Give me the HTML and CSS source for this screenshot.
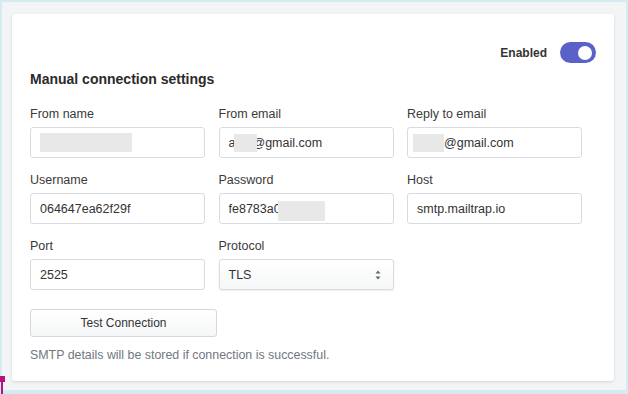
FILE: index.html
```html
<!DOCTYPE html>
<html lang="en">
<head>
<meta charset="utf-8">
<title>Manual connection settings</title>
<link rel="stylesheet" href="styles.css">
</head>
<body>
<div class="frame">
  <div class="card">
    <div class="card-head">
      <span class="toggle-label">Enabled</span>
      <span class="toggle"><span class="knob"></span></span>
    </div>
    <h2 class="title">Manual connection settings</h2>
    <div class="grid">
      <div class="field">
        <label class="label">From name</label>
        <div class="input"><span class="redact r-name"></span></div>
      </div>
      <div class="field">
        <label class="label">From email</label>
        <div class="input">a<span class="redact r-from"></span>@gmail.com</div>
      </div>
      <div class="field">
        <label class="label">Reply to email</label>
        <div class="input"><span class="redact r-reply"></span>@gmail.com</div>
      </div>
      <div class="field">
        <label class="label">Username</label>
        <div class="input">064647ea62f29f</div>
      </div>
      <div class="field">
        <label class="label">Password</label>
        <div class="input">fe8783a0<span class="redact r-pass"></span></div>
      </div>
      <div class="field">
        <label class="label">Host</label>
        <div class="input">smtp.mailtrap.io</div>
      </div>
      <div class="field">
        <label class="label">Port</label>
        <div class="input">2525</div>
      </div>
      <div class="field">
        <label class="label">Protocol</label>
        <div class="input select">
          <span>TLS</span>
          <svg class="arrows" width="6" height="10" viewBox="0 0 6 10"><path d="M3 0.5 L5.5 3.5 H0.5 Z M3 9.5 L5.5 6.5 H0.5 Z" fill="#666"/></svg>
        </div>
      </div>
    </div>
    <button class="btn" type="button">Test Connection</button>
    <p class="note">SMTP details will be stored if connection is successful.</p>
  </div>
  <span class="marker"></span>
</div>
</body>
</html>
```

FILE: styles.css
```css
html, body {
  margin: 0;
  padding: 0;
}
body {
  font-family: "Liberation Sans", Arial, sans-serif;
  color: #333;
}
.frame {
  box-sizing: border-box;
  height: 394px;
  background: #f3f4f6;
  border-style: solid;
  border-color: #d3ebf1;
  border-width: 2px 2px 4px 2px;
  padding: 12px 12px 9px 10px;
  position: relative;
}
.card {
  box-sizing: border-box;
  height: 100%;
  background: #fff;
  border-radius: 3px;
  box-shadow: 0 1px 3px rgba(0, 0, 0, 0.13);
  padding: 28px 18px 0 18px;
}
.card-head {
  display: flex;
  justify-content: flex-end;
  align-items: center;
  gap: 13px;
  height: 21px;
}
.toggle-label {
  font-weight: bold;
  font-size: 12px;
  color: #333;
}
.toggle {
  box-sizing: border-box;
  width: 36px;
  height: 21px;
  border-radius: 10.5px;
  background: #5a61c9;
  display: flex;
  align-items: center;
  justify-content: flex-end;
  padding-right: 4px;
}
.knob {
  width: 14px;
  height: 14px;
  border-radius: 50%;
  background: #fff;
}
.title {
  margin: 7px 0 0;
  font-size: 14px;
  line-height: 18px;
  font-weight: bold;
  color: #2b2b2b;
}
.grid {
  display: grid;
  grid-template-columns: repeat(3, 175px);
  column-gap: 13.5px;
  row-gap: 14px;
  margin-top: 18px;
}
.label {
  display: block;
  font-size: 12.5px;
  line-height: 16px;
  color: #3a3a3a;
  margin-bottom: 5px;
}
.input {
  box-sizing: border-box;
  height: 31px;
  border: 1px solid #d8dbe0;
  border-radius: 3px;
  padding: 0 9px;
  display: flex;
  align-items: center;
  font-size: 12.5px;
  color: #333;
  background: #fff;
  white-space: pre;
}
.select {
  justify-content: space-between;
  padding-right: 12px;
  background: linear-gradient(#ffffff, #f6f7f8);
  box-shadow: 0 1px 2px rgba(0, 0, 0, 0.08);
}
.redact {
  display: inline-block;
  background: #e8e8e8;
  height: 18px;
  position: relative;
}
.r-name {
  width: 92px;
  height: 19px;
}
.r-from {
  width: 23px;
  margin-left: -1px;
  margin-right: -5px;
}
.r-reply {
  width: 31px;
  margin-left: -4px;
}
.r-pass {
  width: 47px;
  height: 20px;
  margin-left: -3px;
  align-self: flex-end;
  margin-bottom: 2px;
}
.btn {
  display: block;
  margin-top: 19px;
  width: 187px;
  height: 28px;
  border: 1px solid #d5d8dc;
  border-radius: 3px;
  background: linear-gradient(#ffffff, #f5f6f7);
  font-family: "Liberation Sans", Arial, sans-serif;
  font-size: 12px;
  color: #333;
  padding: 0;
  cursor: pointer;
}
.note {
  margin: 10px 0 0;
  font-size: 12.4px;
  line-height: 16px;
  color: #72787f;
}
.marker {
  position: absolute;
  left: -2px;
  top: 374px;
  width: 5px;
  height: 6px;
  background: #b8117d;
}
.marker::after {
  content: "";
  position: absolute;
  left: 1px;
  top: 6px;
  width: 2px;
  height: 14px;
  background: #b8117d;
}
```
